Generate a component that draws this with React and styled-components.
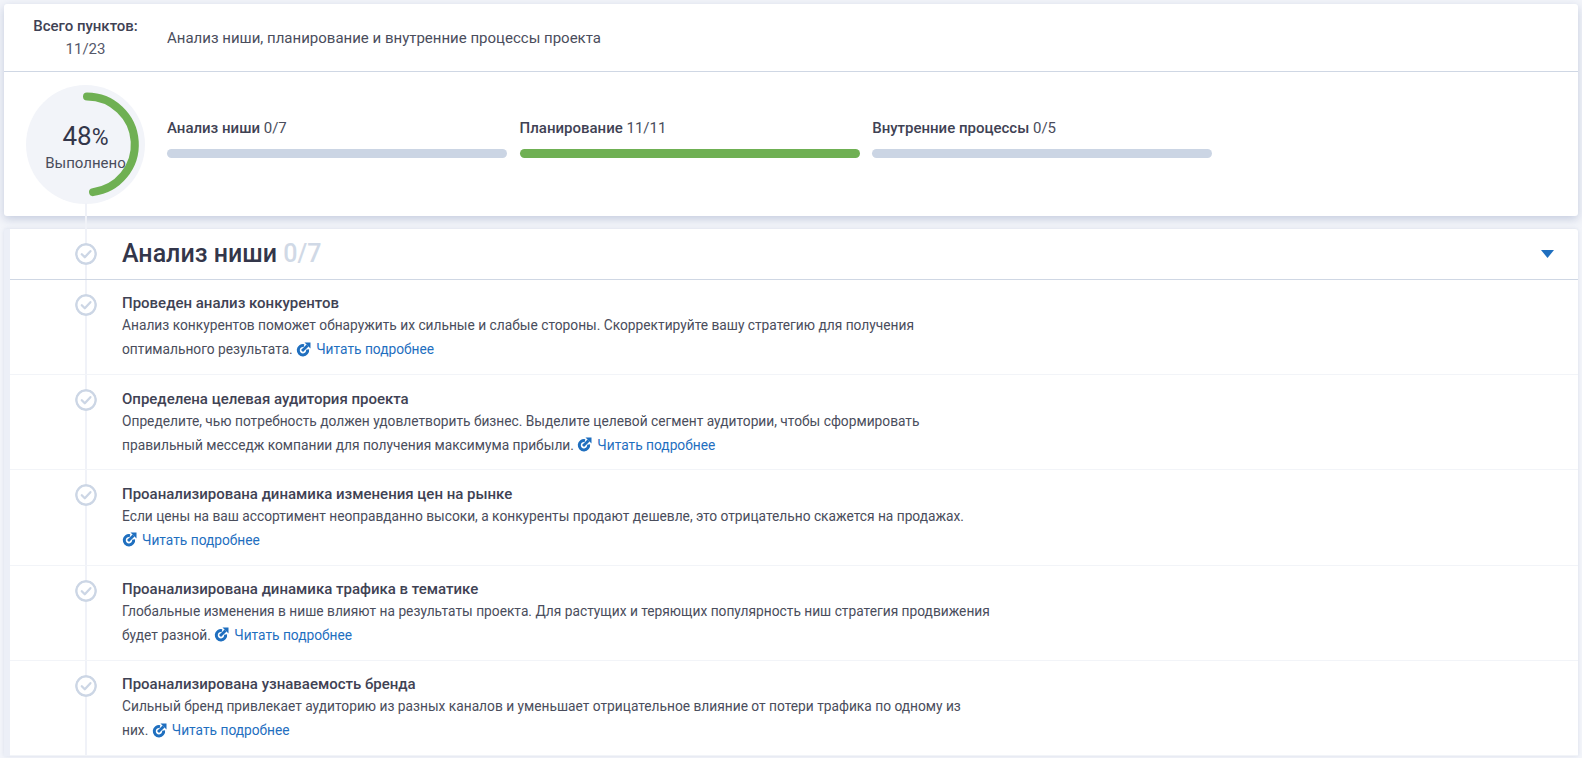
import React from "react";
import styled, { createGlobalStyle } from "styled-components";

const Global = createGlobalStyle`
  html, body { margin: 0; padding: 0; height: 758px; overflow: hidden; background: #f3f5fa; }
  body { font-family: Roboto, "Liberation Sans", sans-serif; color: #3a3d4d; }
`;
const Page = styled.div`
  padding: 4px 4px 0;
  height: 754px;
  overflow: hidden;
`;
const TopCard = styled.section`
  position: relative;
  z-index: 1;
  height: 212px;
  background: #fff;
  border-radius: 3px;
  box-shadow: 0 3px 10px rgba(110, 125, 170, 0.35);
`;
const Summary = styled.div`
  display: flex;
  align-items: center;
  height: 67px;
  border-bottom: 1px solid #cfd7e4;
`;
const Totals = styled.div`
  width: 163px;
  text-align: center;
  font-size: 15px;
  line-height: 23px;
  flex: none;
`;
const TotalsLabel = styled.div`
  font-weight: 500;
  color: #3f4254;
`;
const TotalsValue = styled.div`
  color: #55586a;
`;
const SummaryText = styled.div`
  font-size: 15px;
  color: #4a4d5c;
`;
const Progress = styled.div`
  display: flex;
  padding: 13px 0 0 22px;
  gap: 22px;
`;
const Dial = styled.div`
  position: relative;
  width: 119px;
  height: 119px;
  border-radius: 50%;
  background: #f2f4f9;
  flex: none;
  display: flex;
  flex-direction: column;
  align-items: center;
  text-align: center;
`;
const DialArc = styled.svg`
  position: absolute;
  inset: 0;
`;
const DialTail = styled.div`
  position: absolute;
  left: 59px;
  top: 118px;
  width: 2px;
  height: 40px;
  background: #f0f2f8;
`;
const Percent = styled.div`
  font-size: 26px;
  line-height: 28px;
  margin-top: 37px;
  color: #33364a;
`;
const PercentSign = styled.span`
  font-size: 23px;
`;
const DialLabel = styled.div`
  font-size: 15px;
  line-height: 20px;
  margin-top: 1px;
  color: #4a4d5c;
`;
const Bars = styled.div`
  display: flex;
  gap: 12.6px;
  padding-top: 33px;
`;
const BarBlock = styled.div`
  width: 340px;
`;
const BarLabel = styled.div`
  font-size: 15px;
  line-height: 20px;
  color: #4a4d5c;
  white-space: nowrap;
`;
const Strong = styled.strong`
  font-weight: 500;
  color: #3f4254;
`;
const Bar = styled.div`
  height: 9px;
  margin-top: 11px;
  border-radius: 5px;
  background: ${(p) => (p.$done ? "#6fb053" : "#cbd5e4")};
`;
const ListCard = styled.section`
  position: relative;
  margin-top: 13px;
  background: #fff;
  border-left: 6px solid #eceff7;
  border-radius: 3px 3px 0 0;
  box-shadow: 0 0 4px rgba(110, 125, 170, 0.18);
`;
const Line = styled.div`
  position: absolute;
  left: 75px;
  top: -16px;
  bottom: 0;
  width: 2px;
  background: #f0f2f8;
`;
const Head = styled.header`
  position: relative;
  display: flex;
  align-items: center;
  height: 50px;
  border-bottom: 1px solid #cfd7e4;
`;
const CheckSlot = styled.div`
  position: relative;
  width: 112px;
  flex: none;
  padding-left: 65px;
  box-sizing: border-box;
`;
const Title = styled.h2`
  margin: 0;
  font-size: 25px;
  line-height: 50px;
  font-weight: 500;
  color: #33364a;
`;
const Count = styled.span`
  color: #d0d9e6;
`;
const Caret = styled.svg`
  position: absolute;
  right: 24px;
  top: 21px;
`;
const Item = styled.article`
  position: relative;
  display: flex;
  height: 95.2px;
  padding-top: 13.4px;
  box-sizing: border-box;
  border-bottom: 1px solid #f2f4f8;
`;
const ItemCheck = styled(CheckSlot)`
  margin-top: 0.6px;
`;
const ItemBody = styled.div`
  width: 868px;
`;
const ItemTitle = styled.div`
  font-weight: 500;
  font-size: 15px;
  line-height: 20px;
  color: #3f4254;
`;
const ItemText = styled.p`
  margin: 0;
  line-height: 24px;
  color: #4a4d5c;
  font-size: 13.75px;
`;
const More = styled.a`
  color: #1f6fbf;
  text-decoration: none;
  white-space: nowrap;
  display: inline-flex;
  align-items: center;
  gap: 5px;
  vertical-align: top;
`;
const CheckSvg = styled.svg`
  display: block;
  position: relative;
  background: #fff;
  border-radius: 50%;
`;

const Check = () => (
  <CheckSvg width="22" height="22" viewBox="0 0 22 22" fill="none">
    <circle cx="11" cy="11" r="9.7" stroke="#ccd6e5" strokeWidth="2.4" />
    <path d="M6.8 11.2l3 3 5.6-6" stroke="#ccd6e5" strokeWidth="2.3" strokeLinecap="round" strokeLinejoin="round" />
  </CheckSvg>
);
const LinkIcon = () => (
  <svg width="15" height="15" viewBox="0 0 15 15" fill="none">
    <path d="M8 3.600A4.700 4.700 0 1 0 11.600 7.400" stroke="#1f6fbf" strokeWidth="3" />
    <path d="M6 9L11.600 3.400" stroke="#1f6fbf" strokeWidth="2.8" />
    <path d="M8.500 .5h6V6.500z" fill="#1f6fbf" />
  </svg>
);

const items = [
  ["Проведен анализ конкурентов", "Анализ конкурентов поможет обнаружить их сильные и слабые стороны. Скорректируйте вашу стратегию для получения оптимального результата."],
  ["Определена целевая аудитория проекта", "Определите, чью потребность должен удовлетворить бизнес. Выделите целевой сегмент аудитории, чтобы сформировать правильный месседж компании для получения максимума прибыли."],
  ["Проанализирована динамика изменения цен на рынке", "Если цены на ваш ассортимент неоправданно высоки, а конкуренты продают дешевле, это отрицательно скажется на продажах."],
  ["Проанализирована динамика трафика в тематике", "Глобальные изменения в нише влияют на результаты проекта. Для растущих и теряющих популярность ниш стратегия продвижения будет разной."],
  ["Проанализирована узнаваемость бренда", "Сильный бренд привлекает аудиторию из разных каналов и уменьшает отрицательное влияние от потери трафика по одному из них."],
];

export default function App() {
  return (
    <Page>
      <Global />
      <TopCard>
        <Summary>
          <Totals>
            <TotalsLabel>Всего пунктов:</TotalsLabel>
            <TotalsValue>11/23</TotalsValue>
          </Totals>
          <SummaryText>Анализ ниши, планирование и внутренние процессы проекта</SummaryText>
        </Summary>
        <Progress>
          <Dial>
            <DialTail />
            <Percent>48<PercentSign>%</PercentSign></Percent>
            <DialLabel>Выполнено</DialLabel>
            <DialArc width="119" height="119" viewBox="0 0 119 119" fill="none">
              <path d="M61 11.500 A48 48 0 0 1 67 107.100" stroke="#6fb053" strokeWidth="8" strokeLinecap="round" />
            </DialArc>
          </Dial>
          <Bars>
            <BarBlock>
              <BarLabel><Strong>Анализ ниши</Strong> 0/7</BarLabel>
              <Bar />
            </BarBlock>
            <BarBlock>
              <BarLabel><Strong>Планирование</Strong> 11/11</BarLabel>
              <Bar $done />
            </BarBlock>
            <BarBlock>
              <BarLabel><Strong>Внутренние процессы</Strong> 0/5</BarLabel>
              <Bar />
            </BarBlock>
          </Bars>
        </Progress>
      </TopCard>
      <ListCard>
        <Line />
        <Head>
          <CheckSlot><Check /></CheckSlot>
          <Title>Анализ ниши <Count>0/7</Count></Title>
          <Caret width="13" height="8" viewBox="0 0 13 8"><path d="M0 0h13L6.500 8z" fill="#1f6fbf" /></Caret>
        </Head>
        {items.map(([t, d]) => (
          <Item key={t}>
            <ItemCheck><Check /></ItemCheck>
            <ItemBody>
              <ItemTitle>{t}</ItemTitle>
              <ItemText>{d} <More href="#" onClick={(e) => e.preventDefault()}><LinkIcon />Читать подробнее</More></ItemText>
            </ItemBody>
          </Item>
        ))}
      </ListCard>
    </Page>
  );
}
